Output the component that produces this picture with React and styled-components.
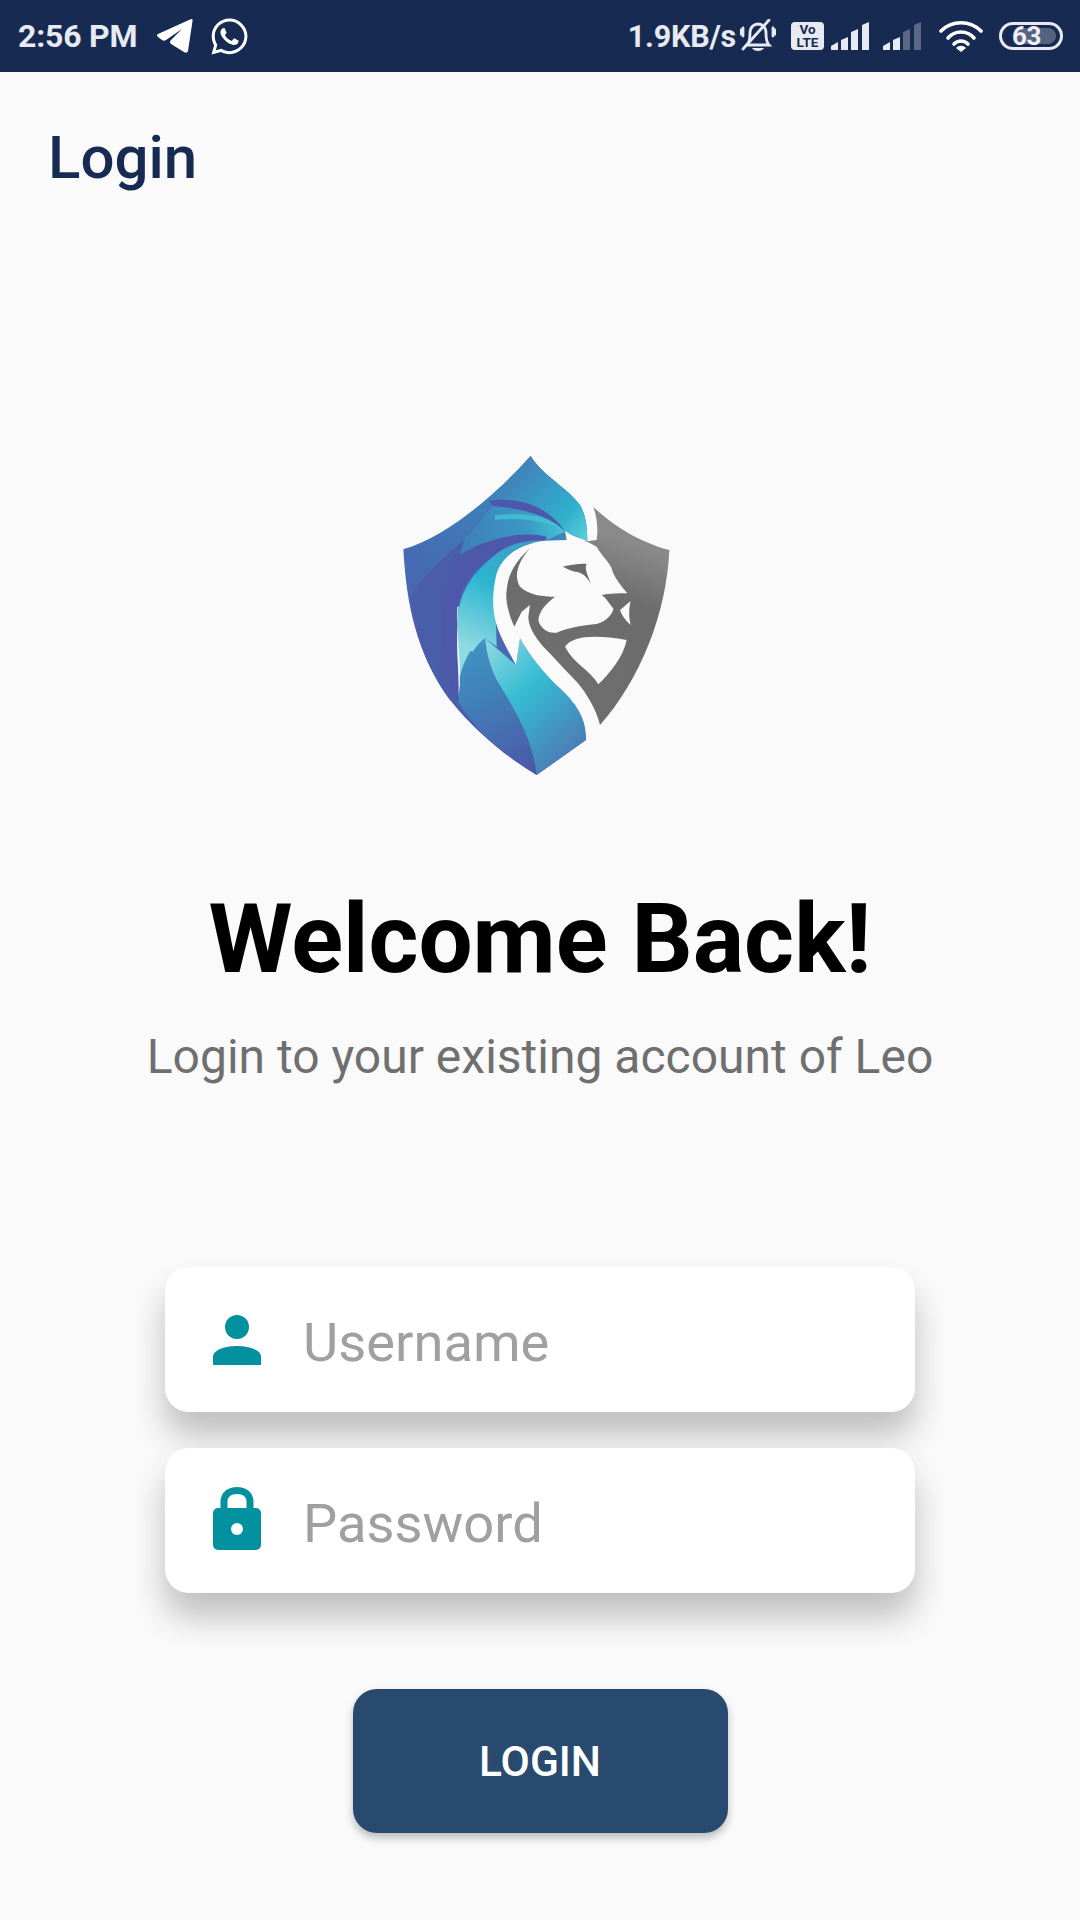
import React from "react";
import styled, { createGlobalStyle } from "styled-components";
import { FaWhatsapp } from "react-icons/fa";

const Global = createGlobalStyle`
  html, body { margin: 0; padding: 0; background: #fafafb; }
  * { box-sizing: border-box; }
`;

const Page = styled.div`
  width: 1080px;
  height: 1920px;
  overflow: hidden;
  background: #fafafb;
  font-family: Roboto, "Liberation Sans", sans-serif;
  display: flex;
  flex-direction: column;
`;

const StatusBar = styled.header`
  height: 72px;
  background: #172a52;
  color: #e8eaf1;
  display: flex;
  align-items: center;
  justify-content: space-between;
  padding: 0 17px 0 18px;
  font-weight: 500;
`;

const StatusGroup = styled.div`
  display: flex;
  align-items: center;
`;

const Time = styled.span`
  font-size: 32px;
  font-weight: 700;
  letter-spacing: -0.2px;
  margin-right: 20px;
`;

const Speed = styled.span`
  font-size: 30.5px;
  font-weight: 700;
  letter-spacing: -0.2px;
  margin-right: 4px;
`;

const Glyph = styled.svg`
  display: block;
  flex: none;
  margin-right: ${(p) => p.$gap || 0}px;
`;

const LockGlyph = styled(Glyph)`
  margin-bottom: 3px;
`;

const WhatsApp = styled(FaWhatsapp)`
  color: #fff;
  font-size: 41px;
  margin-left: 16px;
`;

const Vo = styled.div`
  width: 33px;
  height: 28px;
  border-radius: 4px;
  background: #e8eaf1;
  color: #172a52;
  font-size: 13.5px;
  line-height: 12.5px;
  font-weight: 700;
  text-align: center;
  padding-top: 1px;
  margin-right: 7px;
`;

const Battery = styled.div`
  position: relative;
  width: 64px;
  height: 28px;
  border: 3px solid #e8eaf1;
  border-radius: 15px;
  margin-left: 16px;
  display: flex;
  align-items: center;
  padding-left: 10px;
  font-size: 26px;
  font-weight: 700;
  color: #eef0f5;
`;

const BatteryFill = styled.div`
  position: absolute;
  left: 12px;
  right: 4px;
  top: 3px;
  bottom: 3px;
  background: #55637f;
  border-radius: 10px;
`;

const BatteryText = styled.span`
  position: relative;
  letter-spacing: -0.5px;
`;

const ScreenTitle = styled.h1`
  margin: 0;
  padding: 52px 0 0 48px;
  font-size: 60px;
  line-height: 68px;
  font-weight: 500;
  color: #172a52;
`;

const LogoWrap = styled.div`
  display: flex;
  justify-content: center;
  margin-top: 248px;
`;

const Heading = styled.h2`
  margin: 96px 0 0;
  text-align: center;
  font-size: 96px;
  line-height: 106px;
  font-weight: 700;
  color: #000;
`;

const Sub = styled.p`
  margin: 38px 0 0;
  text-align: center;
  font-size: 48px;
  line-height: 54px;
  color: #6f6f6f;
`;

const Form = styled.form`
  margin-top: 183px;
  display: flex;
  flex-direction: column;
  align-items: center;
  gap: 36px;
`;

const Field = styled.div`
  width: 750px;
  height: 145px;
  background: #fff;
  border-radius: 24px;
  box-shadow: 0 24px 34px rgba(0, 0, 0, 0.24);
  display: flex;
  align-items: center;
  padding-left: 48px;
  gap: 42px;
`;

const Placeholder = styled.span`
  font-size: 54.3px;
  color: #a0a0a0;
  padding-top: 5px;
`;

const LoginButton = styled.button`
  margin-top: 60px;
  width: 375px;
  height: 144px;
  border: 0;
  border-radius: 24px;
  background: #284a6e;
  color: #fff;
  font-family: inherit;
  font-size: 42.5px;
  font-weight: 500;
  box-shadow: 0 5px 9px rgba(0, 0, 0, 0.25);
`;

const Telegram = () => (
  <Glyph width="36" height="36" viewBox="0 0 36 36">
    <path fill="#fff" d="M1 16 L33 1.5 Q36 0 35.5 3 L31 33 Q30 36 27 34 L14 26 Q12 24 14 22 L25 11 L9 22 Q7 23.5 5 22 L1 19 Q-1 17 1 16 Z" />
  </Glyph>
);

const BellOff = () => (
  <Glyph width="36" height="34" viewBox="0 0 36 34" $gap={15}>
    <g fill="none" stroke="#e8eaf1" strokeWidth="2.8" strokeLinecap="round">
      <path d="M7 26 C10 23 10 19 10 14 C10 8 14 5 18 5 C22 5 26 8 26 14 C26 19 26 23 29 26 Z" />
      <path d="M3 30 L29 1" />
      <path d="M3 9 V17 M0.8 11 V15 M33 9 V17 M35.2 11 V15" />
    </g>
    <path fill="#e8eaf1" d="M12 29 H24 C22 33 14 33 12 29 Z" />
  </Glyph>
);

const Signal = ({ dim }) => {
  const far = dim ? "#5a6885" : "#e8eaf1";
  return (
    <Glyph width="40" height="28" viewBox="0 0 40 28" $gap={dim ? 16 : 12}>
      <path fill="#e8eaf1" d="M0 28 V24 L7 20 V28 Z" />
      <path fill="#e8eaf1" d="M10 28 V18 L17 15 V28 Z" />
      <path fill={far} d="M20 28 V10 L27 7 V28 Z" />
      <path fill={far} d="M31 28 V3 L38 0 V28 Z" />
    </Glyph>
  );
};

const Wifi = () => (
  <Glyph width="44" height="32" viewBox="0 0 44 32">
    <g fill="none" stroke="#fff" strokeWidth="3.6" strokeLinecap="round">
      <path d="M2 11 C13 0 31 0 42 11" />
      <path d="M9 18 C16 10 28 10 35 18" />
      <path d="M15 24 C19 20 25 20 29 24" />
    </g>
    <path fill="#fff" d="M22 32 L17 28 C20 25 24 25 27 28 Z" />
  </Glyph>
);

const Person = () => (
  <Glyph width="48" height="50" viewBox="0 0 48 50">
    <circle cx="24" cy="12" r="12" fill="#04919f" />
    <path fill="#04919f" d="M0 50 V42 C0 34 14 31 24 31 C34 31 48 34 48 42 V50 Z" />
  </Glyph>
);

const Lock = () => (
  <LockGlyph width="48" height="64" viewBox="0 0 48 64">
    <path fill="none" stroke="#04919f" strokeWidth="7" d="M11 24 V15 C11 7 17 3.5 24 3.5 C31 3.5 37 7 37 15 V24" />
    <rect x="0" y="21" width="48" height="42" rx="5" fill="#04919f" />
    <circle cx="24" cy="42" r="6" fill="#fff" />
  </LockGlyph>
);

const bg = "#fafafb";
const Logo = () => (
  <svg width="320" height="350" viewBox="0 0 960 1050" style={{ display: "block" }}>
    <defs>
      <linearGradient id="base" gradientUnits="userSpaceOnUse" x1="70" y1="700" x2="560" y2="120">
        <stop offset="0" stopColor="#4c5aaa" />
        <stop offset="0.55" stopColor="#4274b7" />
        <stop offset="1" stopColor="#3f8fbe" />
      </linearGradient>
      <linearGradient id="top" gradientUnits="userSpaceOnUse" x1="400" y1="90" x2="620" y2="290">
        <stop offset="0" stopColor="#4280ba" />
        <stop offset="0.7" stopColor="#2fb0cc" />
        <stop offset="1" stopColor="#5accd8" />
      </linearGradient>
      <linearGradient id="mid" gradientUnits="userSpaceOnUse" x1="250" y1="340" x2="550" y2="250">
        <stop offset="0" stopColor="#3f7fba" />
        <stop offset="0.65" stopColor="#3a98c3" />
        <stop offset="1" stopColor="#44c4d6" />
      </linearGradient>
      <linearGradient id="inner" gradientUnits="userSpaceOnUse" x1="440" y1="300" x2="280" y2="630">
        <stop offset="0" stopColor="#3f9cc4" />
        <stop offset="0.45" stopColor="#2cb5cf" />
        <stop offset="1" stopColor="#8fd9e2" />
      </linearGradient>
      <linearGradient id="ribbon" gradientUnits="userSpaceOnUse" x1="340" y1="610" x2="610" y2="900">
        <stop offset="0" stopColor="#84d6df" />
        <stop offset="0.42" stopColor="#35bcd2" />
        <stop offset="1" stopColor="#4a7fb7" />
      </linearGradient>
      <linearGradient id="lowerLeft" gradientUnits="userSpaceOnUse" x1="290" y1="600" x2="440" y2="1000">
        <stop offset="0" stopColor="#3f94c2" />
        <stop offset="0.4" stopColor="#4180b9" />
        <stop offset="1" stopColor="#4c57a8" />
      </linearGradient>
      <linearGradient id="gray" gradientUnits="userSpaceOnUse" x1="820" y1="330" x2="660" y2="800">
        <stop offset="0" stopColor="#8a8a8a" />
        <stop offset="0.35" stopColor="#6c6c6c" />
        <stop offset="1" stopColor="#6e6e6e" />
      </linearGradient>
      <filter id="soft"><feGaussianBlur stdDeviation="2" /></filter>
    </defs>
    <g filter="url(#soft)">
      <path fill="url(#base)" d="M452 48 C490 110 560 140 600 195 C620 230 622 270 622 305 L560 900 L618 900 L470 1005 C380 950 290 880 210 780 C110 640 80 500 70 328 C200 290 340 170 452 48 Z" />
      <path fill="#4a5dab" d="M92 470 C130 400 200 350 255 295 C245 320 245 335 240 345 L200 600 L235 790 L210 780 C130 670 100 560 92 470 Z" />
      <path fill="url(#top)" d="M452 48 C490 110 560 140 600 195 C620 230 622 270 622 305 C600 290 575 285 555 275 C520 225 440 185 325 183 C370 140 410 95 452 48 Z" />
      <path fill="url(#mid)" d="M255 295 C290 265 310 230 340 196 C430 205 510 225 555 275 L500 300 C400 280 300 310 240 345 C245 335 245 320 255 295 Z" />
      <path fill="#4d58aa" d="M325 183 C400 170 500 190 555 275 C510 225 420 205 340 198 Z" />
      <path fill="#46c2d6" d="M345 226 C420 215 510 225 555 275 C500 240 420 232 345 240 Z" opacity="0.8" />
      <path fill="#4d58ab" d="M240 345 C310 300 420 270 500 290 L496 302 C380 300 240 390 230 520 C228 620 245 700 235 785 C205 740 190 680 190 610 C185 500 200 400 240 345 Z" />
      <path fill="url(#lowerLeft)" d="M235 785 C245 720 240 650 250 610 L315 595 C325 640 330 680 350 720 C400 800 460 900 470 1005 C380 950 290 880 235 785 Z" />
      <path fill="url(#inner)" d="M495 302 C430 300 380 315 345 345 C290 390 245 440 235 520 C228 570 232 640 238 720 C245 680 260 650 272 632 L278 635 C290 620 300 605 315 595 L350 620 L345 440 Z" />
      <path fill="url(#ribbon)" d="M315 595 L408 675 L420 595 C445 640 490 700 540 745 C590 790 622 840 618 900 L470 1005 C460 900 400 800 350 720 C330 680 320 640 315 595 Z" />
      <path fill="#eaf7f9" d="M232 500 C226 590 250 680 236 770 C238 690 224 600 236 500 Z" />
      <path fill={bg} d="M622 305 C600 290 575 290 555 272 L560 300 L495 302 C430 310 370 340 350 400 C335 460 335 520 355 570 C370 610 395 650 408 675 L420 595 C445 640 490 700 540 745 C590 790 622 840 618 900 L665 855 L700 400 Z" />
      <path fill="url(#gray)" d="M640 200 C700 260 790 310 868 330 C860 520 780 720 660 855 C650 810 620 760 590 725 C560 695 520 650 490 620 C465 590 445 560 445 530 L450 495 L425 515 L403 560 C385 520 375 480 380 450 C384 400 410 360 450 325 L650 300 C655 260 650 230 640 200 Z" />
      <path fill={bg} d="M650 320 C660 340 690 370 695 385 C700 410 725 440 742 460 C715 460 690 460 665 465 C680 475 690 495 700 505 C700 520 680 545 650 552 C610 555 560 565 530 578 C505 582 480 565 475 540 C478 510 500 490 525 470 C490 470 445 465 420 440 C400 405 415 365 450 325 C470 320 530 290 622 305 Z" />
      <path fill={bg} d="M752 483 C746 510 746 530 752 555 C735 540 725 525 720 510 Z" />
      <path fill={bg} d="M555 620 C580 585 650 585 740 600 C730 650 690 700 655 733 C630 690 580 670 555 620 Z" />
      <path fill="#6b6b6b" d="M548 380 C570 375 600 370 620 372 C612 385 625 410 632 430 C620 410 605 395 585 395 C570 392 560 385 548 380 Z" />
    </g>
  </svg>
);

export default function App() {
  return (
    <Page>
      <Global />
      <StatusBar>
        <StatusGroup>
          <Time>2:56 PM</Time>
          <Telegram />
          <WhatsApp />
        </StatusGroup>
        <StatusGroup>
          <Speed>1.9KB/s</Speed>
          <BellOff />
          <Vo>
            Vo
            <br />
            LTE
          </Vo>
          <Signal />
          <Signal dim />
          <Wifi />
          <Battery>
            <BatteryFill />
            <BatteryText>63</BatteryText>
          </Battery>
        </StatusGroup>
      </StatusBar>
      <ScreenTitle>Login</ScreenTitle>
      <LogoWrap>
        <Logo />
      </LogoWrap>
      <Heading>Welcome Back!</Heading>
      <Sub>Login to your existing account of Leo</Sub>
      <Form>
        <Field>
          <Person />
          <Placeholder>Username</Placeholder>
        </Field>
        <Field>
          <Lock />
          <Placeholder>Password</Placeholder>
        </Field>
        <LoginButton type="button">LOGIN</LoginButton>
      </Form>
    </Page>
  );
}
